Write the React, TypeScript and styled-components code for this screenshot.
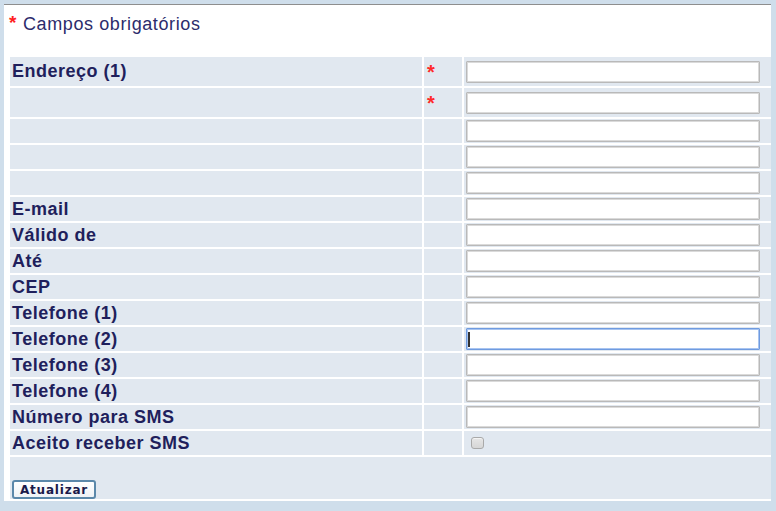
import styled, { createGlobalStyle } from 'styled-components'
import { FC } from 'react'

const GlobalStyle = createGlobalStyle`
  html, body {
    margin: 0;
    padding: 0;
    background: #cfdeeb;
  }
  body {
    font-family: "Liberation Sans", Arial, sans-serif;
  }
`

type Field = { label: string; required?: boolean; tall?: boolean; focused?: boolean }

const fields: Field[] = [
  { label: 'Endereço (1)', required: true, tall: true },
  { label: '', required: true, tall: true },
  { label: '' },
  { label: '' },
  { label: '' },
  { label: 'E-mail' },
  { label: 'Válido de' },
  { label: 'Até' },
  { label: 'CEP' },
  { label: 'Telefone (1)' },
  { label: 'Telefone (2)', focused: true },
  { label: 'Telefone (3)' },
  { label: 'Telefone (4)' },
  { label: 'Número para SMS' },
]

const App: FC = () => {
  return (
    <Page>
      <GlobalStyle />
      <Panel>
        <Header>
          <Star>*</Star>
          <span>Campos obrigatórios</span>
        </Header>
        <FormTable>
          {fields.map((item, index) => (
            <Row key={index} $height={item.tall ? 29 : 24}>
              <LabelCell>{item.label}</LabelCell>
              <MarkCell>{item.required && <RequiredMark>*</RequiredMark>}</MarkCell>
              <InputCell>
                <InputWrap>
                  <TextInput type="text" $focused={item.focused} />
                  {item.focused && <Caret />}
                </InputWrap>
              </InputCell>
            </Row>
          ))}
          <Row $height={24}>
            <LabelCell>Aceito receber SMS</LabelCell>
            <MarkCell />
            <InputCell>
              <CheckBox type="checkbox" />
            </InputCell>
          </Row>
          <ActionRow>
            <SubmitButton type="button">Atualizar</SubmitButton>
          </ActionRow>
        </FormTable>
      </Panel>
    </Page>
  )
}

const Page = styled.div`
  width: 776px;
  height: 511px;
  padding: 4px 5px 0 4px;
  box-sizing: border-box;
`
const Panel = styled.div`
  background: #ffffff;
  border-top: 1px solid #8e8e8e;
  height: 497px;
  box-sizing: border-box;
  padding: 0 0 0 6px;
`
const Header = styled.div`
  height: 52px;
  display: flex;
  align-items: flex-start;
  padding-top: 9px;
  box-sizing: border-box;
  margin-left: -1px;
  font-size: 18px;
  letter-spacing: 0.6px;
  color: #2c2c6c;
`
const Star = styled.span`
  color: #ff1f1f;
  font-weight: bold;
  font-size: 19px;
  line-height: 1;
  margin-right: 6px;
  margin-top: -1px;
`
const FormTable = styled.div`
  display: flex;
  flex-direction: column;
  row-gap: 2px;
`
const Row = styled.div<{ $height: number }>`
  display: grid;
  grid-template-columns: 412px 38px 1fr;
  column-gap: 2px;
  height: ${(p) => p.$height}px;
`
const Cell = styled.div`
  background: #e1e8f0;
  display: flex;
  align-items: center;
`
const LabelCell = styled(Cell)`
  padding-left: 2px;
  font-size: 18px;
  font-weight: bold;
  letter-spacing: 0.5px;
  color: #1f1f5c;
  white-space: nowrap;
`
const MarkCell = styled(Cell)`
  align-items: flex-start;
  padding-left: 3px;
`
const RequiredMark = styled.span`
  color: #ff2a2a;
  font-weight: bold;
  font-size: 20px;
  line-height: 1;
  margin-top: 5px;
`
const InputCell = styled(Cell)`
  padding-left: 2px;
`
const InputWrap = styled.div`
  position: relative;
  display: flex;
`
const TextInput = styled.input<{ $focused?: boolean }>`
  width: 294px;
  height: 22px;
  box-sizing: border-box;
  margin: 0;
  padding: 0 4px;
  background: #ffffff;
  border: 1px solid ${(p) => (p.$focused ? '#6f9be0' : '#b9b9b9')};
  box-shadow: inset 0 0 0 1px ${(p) => (p.$focused ? '#a8c4f0' : '#dadada')};
  border-radius: 1px;
  outline: none;
  font-size: 13px;
`
const Caret = styled.span`
  position: absolute;
  left: 2px;
  top: 4px;
  width: 2px;
  height: 15px;
  background: #333333;
`
const CheckBox = styled.input`
  appearance: none;
  margin: 0 0 0 5px;
  width: 13px;
  height: 12px;
  border: 1px solid #a9a9a9;
  border-radius: 3px;
  background: linear-gradient(#e6e6e6, #d6d6d6);
  box-shadow: inset 0 1px 0 #f4f4f4;
`
const ActionRow = styled.div`
  height: 42px;
  background: #e1e8f0;
  display: flex;
  align-items: flex-end;
  padding-left: 2px;
`
const SubmitButton = styled.button`
  width: 84px;
  height: 19px;
  padding: 0;
  margin: 0;
  border: 2px solid #5b88aa;
  border-radius: 3px;
  background: linear-gradient(#ffffff, #eef2f6);
  font-family: "DejaVu Sans", Verdana, sans-serif;
  font-weight: bold;
  font-size: 12px;
  letter-spacing: 0.8px;
  color: #1a1a4a;
  line-height: 1;
  cursor: pointer;
`

export default App
